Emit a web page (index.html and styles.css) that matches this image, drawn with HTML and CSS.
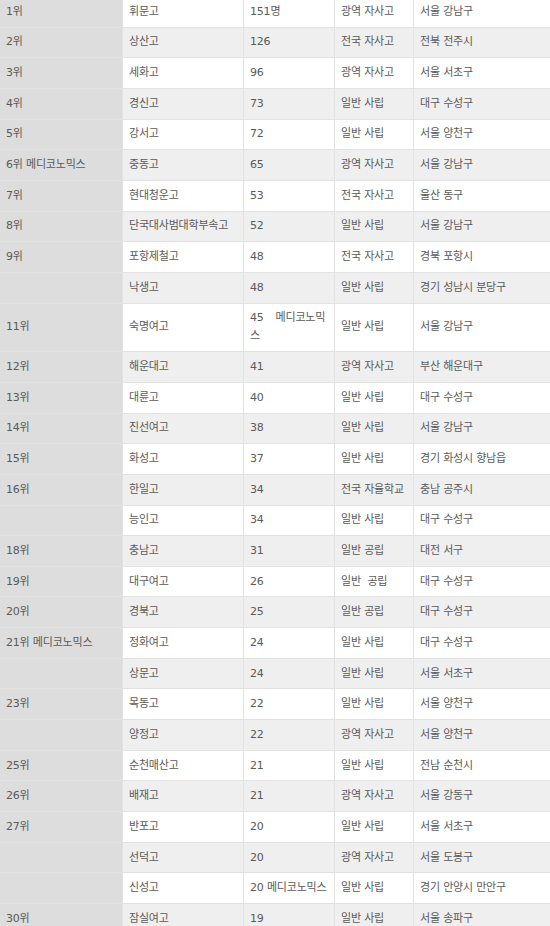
FILE: index.html
```html
<!DOCTYPE html>
<html lang="ko">
<head>
<meta charset="utf-8">
<title>순위</title>
<link rel="stylesheet" href="styles.css">
</head>
<body>
<table class="rank">
<colgroup><col class="c1"><col class="c2"><col class="c3"><col class="c4"><col class="c5"></colgroup>
<tbody>
<tr><td>1위</td><td>휘문고</td><td>151명</td><td>광역 자사고</td><td>서울 강남구</td></tr>
<tr><td>2위</td><td>상산고</td><td>126</td><td>전국 자사고</td><td>전북 전주시</td></tr>
<tr><td>3위</td><td>세화고</td><td>96</td><td>광역 자사고</td><td>서울 서초구</td></tr>
<tr><td>4위</td><td>경신고</td><td>73</td><td>일반 사립</td><td>대구 수성구</td></tr>
<tr><td>5위</td><td>강서고</td><td>72</td><td>일반 사립</td><td>서울 양천구</td></tr>
<tr><td>6위 메디코노믹스</td><td>중동고</td><td>65</td><td>광역 자사고</td><td>서울 강남구</td></tr>
<tr><td>7위</td><td>현대청운고</td><td>53</td><td>전국 자사고</td><td>울산 동구</td></tr>
<tr><td>8위</td><td>단국대사범대학부속고</td><td>52</td><td>일반 사립</td><td>서울 강남구</td></tr>
<tr><td>9위</td><td>포항제철고</td><td>48</td><td>전국 자사고</td><td>경북 포항시</td></tr>
<tr><td></td><td>낙생고</td><td>48</td><td>일반 사립</td><td>경기 성남시 분당구</td></tr>
<tr><td>11위</td><td>숙명여고</td><td class="top">45<span class="sp"></span>메디코노믹<br>스</td><td>일반 사립</td><td>서울 강남구</td></tr>
<tr><td>12위</td><td>해운대고</td><td>41</td><td>광역 자사고</td><td>부산 해운대구</td></tr>
<tr><td>13위</td><td>대륜고</td><td>40</td><td>일반 사립</td><td>대구 수성구</td></tr>
<tr><td>14위</td><td>진선여고</td><td>38</td><td>일반 사립</td><td>서울 강남구</td></tr>
<tr><td>15위</td><td>화성고</td><td>37</td><td>일반 사립</td><td>경기 화성시 향남읍</td></tr>
<tr><td>16위</td><td>한일고</td><td>34</td><td>전국 자율학교</td><td>충남 공주시</td></tr>
<tr><td></td><td>능인고</td><td>34</td><td>일반 사립</td><td>대구 수성구</td></tr>
<tr><td>18위</td><td>충남고</td><td>31</td><td>일반 공립</td><td>대전 서구</td></tr>
<tr><td>19위</td><td>대구여고</td><td>26</td><td>일반&nbsp; 공립</td><td>대구 수성구</td></tr>
<tr><td>20위</td><td>경북고</td><td>25</td><td>일반 공립</td><td>대구 수성구</td></tr>
<tr><td>21위 메디코노믹스</td><td>정화여고</td><td>24</td><td>일반 사립</td><td>대구 수성구</td></tr>
<tr><td></td><td>상문고</td><td>24</td><td>일반 사립</td><td>서울 서초구</td></tr>
<tr><td>23위</td><td>목동고</td><td>22</td><td>일반 사립</td><td>서울 양천구</td></tr>
<tr><td></td><td>양정고</td><td>22</td><td>광역 자사고</td><td>서울 양천구</td></tr>
<tr><td>25위</td><td>순천매산고</td><td>21</td><td>일반 사립</td><td>전남 순천시</td></tr>
<tr><td>26위</td><td>배재고</td><td>21</td><td>광역 자사고</td><td>서울 강동구</td></tr>
<tr><td>27위</td><td>반포고</td><td>20</td><td>일반 사립</td><td>서울 서초구</td></tr>
<tr><td></td><td>선덕고</td><td>20</td><td>광역 자사고</td><td>서울 도봉구</td></tr>
<tr><td></td><td>신성고</td><td>20 메디코노믹스</td><td>일반 사립</td><td>경기 안양시 만안구</td></tr>
<tr><td>30위</td><td>잠실여고</td><td>19</td><td>일반 사립</td><td>서울 송파구</td></tr>
</tbody>
</table>
</body>
</html>
```

FILE: styles.css
```css
html, body {
  margin: 0;
  padding: 0;
  background: #ffffff;
  overflow: hidden;
}

.rank {
  border-collapse: collapse;
  table-layout: fixed;
  width: 560px;
  margin: -4px 0 0 -1px;
  font-family: "DejaVu Sans", "Noto Sans CJK KR", sans-serif;
  font-size: 11px;
  letter-spacing: -0.2px;
  line-height: 18px;
  color: #5a5a5a;
}

.c1 { width: 123px; }
.c2 { width: 121px; }
.c3 { width: 91px; }
.c4 { width: 79px; }
.c5 { width: 146px; }

.rank td {
  border: 1px solid #e2e2e2;
  padding: 5.83px 0 5.83px 6px;
  vertical-align: middle;
  text-align: left;
  white-space: normal;
}

.rank tr:nth-child(even) td {
  background: #efefef;
}

.rank td:first-child,
.rank tr:nth-child(even) td:first-child {
  background: #dcdddc;
}

.rank td.top {
  vertical-align: top;
}

.sp {
  display: inline-block;
  width: 12px;
}
```
